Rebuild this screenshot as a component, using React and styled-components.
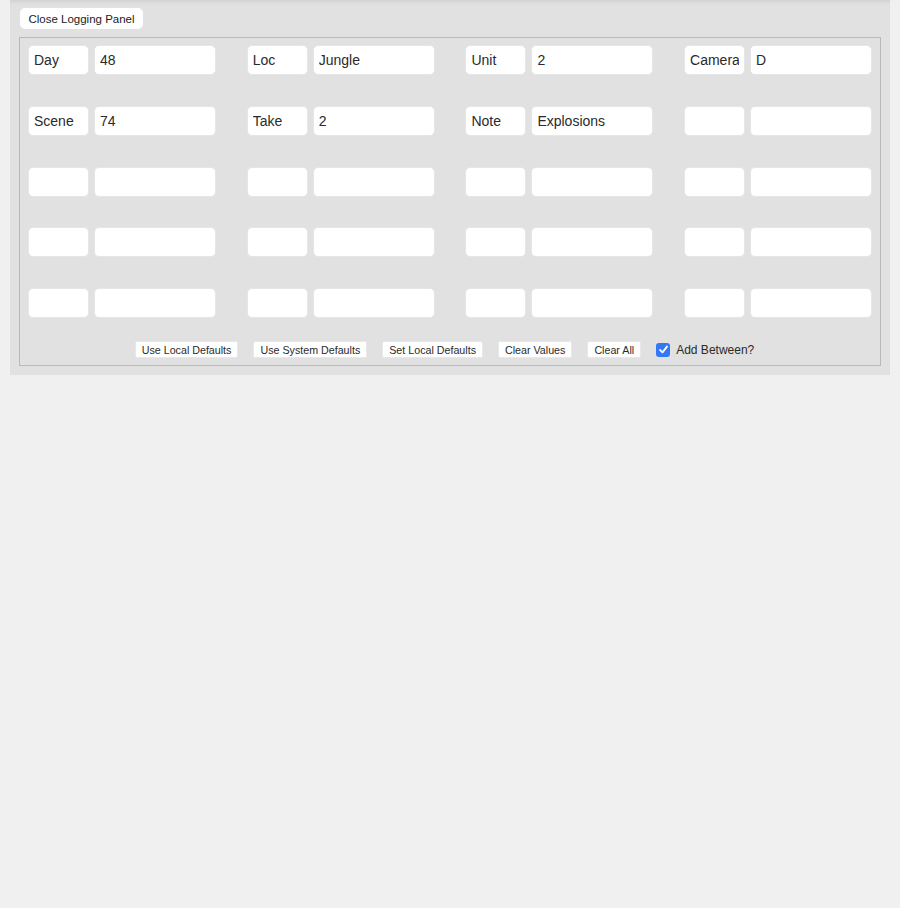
import React from "react";
import styled, { createGlobalStyle } from "styled-components";

const Global = createGlobalStyle`
  html, body { margin: 0; padding: 0; background: #f0f0f0; }
  body { font-family: "Liberation Sans", Arial, sans-serif; }
  * { box-sizing: border-box; }
`;

const Page = styled.div`
  width: 900px;
  min-height: 908px;
  background: #f0f0f0;
`;

const Panel = styled.div`
  margin: 0 10px;
  width: 880px;
  background: #e1e1e1;
  padding: 8px 9px 9px 9px;
  box-shadow: inset 0 4px 4px -3px rgba(0, 0, 0, 0.1);
  display: flex;
  flex-direction: column;
  align-items: flex-start;
`;

const CloseButton = styled.button`
  margin-left: 1px;
  width: 123px;
  height: 21px;
  padding: 0;
  background: #ffffff;
  border: none;
  border-radius: 5px;
  font-family: "Liberation Sans", Arial, sans-serif;
  font-size: 11.5px;
  color: #222;
  cursor: pointer;
`;

const Box = styled.div`
  margin-top: 8px;
  width: 862px;
  border: 1px solid #b9b9b9;
  padding: 7px 7px 7px 8px;
`;

const Grid = styled.div`
  display: grid;
  grid-template-columns: repeat(4, 188px);
  column-gap: 30.7px;
  row-gap: 30.8px;
`;

const Pair = styled.div`
  display: flex;
  gap: 5px;
`;

const Field = styled.input`
  width: ${(p) => p.$w}px;
  height: 30px;
  border: 1px solid #e6e6e6;
  border-radius: 5px;
  background: #fff;
  padding: 0 5px;
  font-family: "Liberation Sans", Arial, sans-serif;
  font-size: 14px;
  color: #2a2a2a;
  outline: none;
`;

const Controls = styled.div`
  margin-top: 23px;
  display: flex;
  justify-content: center;
  align-items: center;
  gap: 15px;
  padding-right: 12px;
`;

const SmallButton = styled.button`
  height: 17px;
  padding: 0 6px;
  background: #fff;
  border: 1px solid #e8e8e8;
  border-radius: 2px;
  font-family: "Liberation Sans", Arial, sans-serif;
  font-size: 10.7px;
  color: #2a2a2a;
  cursor: pointer;
`;

const CheckLabel = styled.label`
  display: flex;
  align-items: center;
  gap: 6px;
  font-size: 12px;
  color: #2a2a2a;
  font-family: "Liberation Sans", Arial, sans-serif;
`;

const CheckBox = styled.span`
  width: 14px;
  height: 14px;
  border-radius: 3px;
  background: #3478f6;
  display: flex;
  align-items: center;
  justify-content: center;
`;

const rows = [
  [
    ["Day", "48"],
    ["Loc", "Jungle"],
    ["Unit", "2"],
    ["Camera", "D"],
  ],
  [
    ["Scene", "74"],
    ["Take", "2"],
    ["Note", "Explosions"],
    ["", ""],
  ],
];
while (rows.length < 5) rows.push([["", ""], ["", ""], ["", ""], ["", ""]]);

export default function App() {
  return (
    <Page>
      <Global />
      <Panel>
        <CloseButton>Close Logging Panel</CloseButton>
        <Box>
          <Grid>
            {rows.flat().map(([k, v], i) => (
              <Pair key={i}>
                <Field $w={61} defaultValue={k} />
                <Field $w={122} defaultValue={v} />
              </Pair>
            ))}
          </Grid>
          <Controls>
            <SmallButton>Use Local Defaults</SmallButton>
            <SmallButton>Use System Defaults</SmallButton>
            <SmallButton>Set Local Defaults</SmallButton>
            <SmallButton>Clear Values</SmallButton>
            <SmallButton>Clear All</SmallButton>
            <CheckLabel>
              <CheckBox>
                <svg width="11" height="11" viewBox="0 0 12 12">
                  <path
                    d="M2.2 6.4 L4.9 9.1 L9.8 2.8"
                    fill="none"
                    stroke="#fff"
                    strokeWidth="2"
                    strokeLinecap="round"
                    strokeLinejoin="round"
                  />
                </svg>
              </CheckBox>
              Add Between?
            </CheckLabel>
          </Controls>
        </Box>
      </Panel>
    </Page>
  );
}
